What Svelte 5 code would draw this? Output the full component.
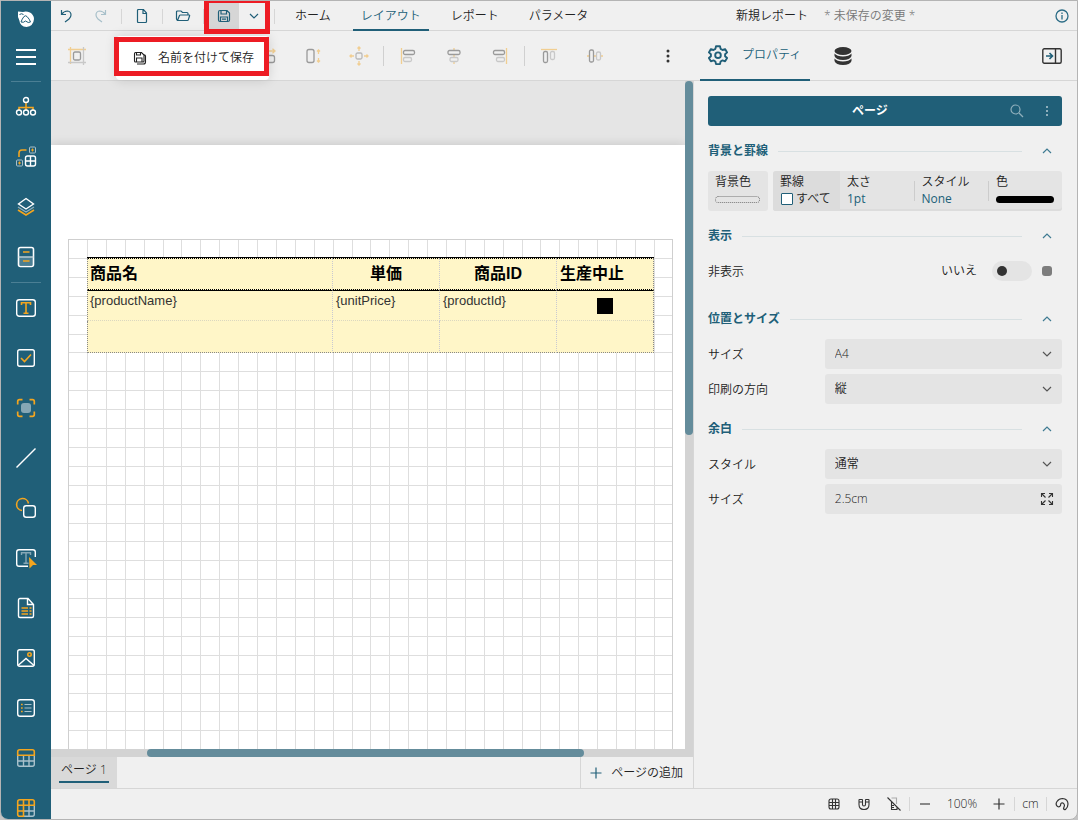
<script>
  const tools = [
    'explorer', 'groups', 'layers', 'sections', 'rule', 'text', 'check', 'container', 'line',
    'shape', 'input', 'richtext', 'image', 'list', 'table', 'tablix'
  ];
  const toolLabels = {
    explorer: 'レポートエクスプローラー', groups: 'グループエディタ', layers: 'レイヤー', sections: 'ライブラリ',
    text: 'テキストボックス', check: 'チェックボックス', container: 'コンテナ', line: '直線', shape: '図形',
    input: '入力フィールド', richtext: '書式付きテキスト', image: 'イメージ', list: 'リスト', table: 'テーブル', tablix: 'Tablix'
  };
  const tabs = ['ホーム', 'レイアウト', 'レポート', 'パラメータ'];
  const arrange = [
    'snap', 'fit', '|', 'same', '|', 'both', 'width', 'height', 'move', '|',
    'left', 'center', 'right', '|', 'top', 'middle'
  ];
  const cell = 18.9;
  const columns = Array.from({ length: 31 }, (_, i) => Math.round((i + 1) * cell) - 1);
  const rows = Array.from({ length: 60 }, (_, i) => Math.round((i + 1) * cell) - 1);

  let activeTab = $state('レイアウト');
  let hidden = $state(false);
  let allBorders = $state(false);
</script>

{#snippet chevron(up)}
  <svg class="chev" width="10" height="6" viewBox="0 0 10 6" fill="none" stroke="currentColor" stroke-width="1.2">
    <path d={up ? 'M1 5l4-4 4 4' : 'M1 1l4 4 4-4'} />
  </svg>
{/snippet}

{#snippet heading(title)}
  <header class="section">
    <h2>{title}</h2>
    <span class="line"></span>
    <button aria-label="{title}を折りたたむ">{@render chevron(true)}</button>
  </header>
{/snippet}

{#snippet toolIcon(name)}
  <svg width="22" height="22" viewBox="0 0 22 22" fill="none" stroke="#fff" stroke-width="1.4">
    {#if name === 'explorer'}
      <path d="M11 7v7M4 14v-2.500h14V14" stroke="#f3a51f" stroke-width="1.600" />
      <circle cx="11" cy="4" r="2.500" /><circle cx="4" cy="16.500" r="2.500" /><circle cx="11" cy="16.500" r="2.500" /><circle cx="18" cy="16.500" r="2.500" />
    {:else if name === 'groups'}
      <path d="M4 11V7q0-3 3-3h4.500" stroke="#f3a51f" stroke-width="1.600" />
      <rect x="14.500" y="1" width="6" height="6" rx="1" stroke="#a9c1cb" stroke-width="1" />
      <rect x="1.500" y="14" width="6" height="6" rx="1" stroke="#a9c1cb" stroke-width="1" />
      <path d="M17.500 2.500v3M16 4h3M4.500 15.500v3M3 17h3" stroke="#f3a51f" stroke-width="1" />
      <rect x="10.500" y="10" width="10" height="10" rx="2" /><path d="M15.500 10v10M10.500 15h10" />
    {:else if name === 'layers'}
      <path d="M3 14l8 5 8-5" stroke="#f3a51f" stroke-width="1.600" />
      <path d="M3 11l8 5 8-5" stroke="#8fafbc" />
      <path d="M11 2.500L18.500 8 11 13 3.500 8z" />
    {:else if name === 'sections'}
      <path d="M4 11.500h14V19H4z" fill="#4b7f94" stroke="none" />
      <rect x="3.500" y="1.500" width="15" height="19" rx="2" stroke-width="1.600" />
      <path d="M3.500 11h15" stroke="#c6d6dc" /><path d="M8 6h6.500M8 15h6.500" stroke="#f3a51f" stroke-width="1.600" />
    {:else if name === 'text'}
      <rect x="1.700" y="2.700" width="18.600" height="16.600" rx="2.500" />
      <path d="M6.500 8V5.800h9V8M11 5.800v10.500M8.500 16.300h5" stroke="#f3a51f" stroke-width="1.600" />
    {:else if name === 'check'}
      <rect x="2.700" y="2.700" width="16.600" height="16.600" rx="2" /><path d="M6 11l3.500 3.500L16 7.500" stroke="#f3a51f" stroke-width="1.600" />
    {:else if name === 'container'}
      <path d="M2.700 7.500V4.500q0-1.800 1.800-1.800h3M14.500 2.700h3q1.800 0 1.800 1.800v3M19.300 14.500v3q0 1.800-1.800 1.800h-3M7.500 19.300h-3q-1.800 0-1.800-1.800v-3" stroke="#f3a51f" stroke-width="1.700" />
      <rect x="6" y="6" width="10" height="10" rx="3" fill="#86a7b5" stroke="none" />
    {:else if name === 'line'}
      <path d="M1.500 20.500l19-19" stroke-width="1.500" />
    {:else if name === 'shape'}
      <path d="M13.500 6.500A6 6 0 1 0 7 13.500" stroke="#f3a51f" stroke-width="1.600" /><rect x="8.700" y="8.700" width="11.600" height="11.600" rx="2.500" />
    {:else if name === 'input'}
      <path d="M20.300 10V5q0-2.300-2.300-2.300H4Q1.700 2.700 1.700 5v12q0 2.300 2.300 2.300h9" />
      <path d="M6.500 8V5.800h9V8M11 5.800v10.500M8.500 16.300h5" stroke="#86a7b5" />
      <path d="M14 10l8 8h-4l-3.500 3.500z" fill="#f3a51f" stroke="none" />
    {:else if name === 'richtext'}
      <path d="M3.500 3q0-1.500 1.500-1.500h8l5.500 6V19q0 1.500-1.500 1.500H5q-1.500 0-1.500-1.500zM12.500 1.500v6h6" />
      <path d="M6.500 11h6.500M6.500 14h6.500M6.500 17h6.500M14.500 11h2M14.500 14h2M14.500 17h2" stroke="#f3a51f" stroke-width="1.500" />
    {:else if name === 'image'}
      <rect x="2.700" y="2.700" width="16.600" height="16.600" rx="2" /><path d="M3 18.500l8-7 8 7" /><circle cx="14.500" cy="7.500" r="1.700" stroke="#f3a51f" stroke-width="1.600" />
    {:else if name === 'list'}
      <rect x="2.700" y="2.700" width="16.600" height="16.600" rx="2.500" />
      <path d="M6 7.500h1.700M6 11h1.700M6 14.500h1.700" stroke="#f3a51f" stroke-width="1.500" /><path d="M9.500 7.500h7M9.500 11h7M9.500 14.500h7" stroke="#a9c1cb" stroke-width="1.100" />
    {:else if name === 'table'}
      <path d="M2.700 8.500v8.800q0 2 2 2h12.600q2 0 2-2V8.500M2.700 14h16.600M8.500 9v10M14 9v10" stroke="#a9c1cb" />
      <path d="M2.700 8.300V4.700q0-2 2-2h12.600q2 0 2 2v3.600z" stroke="#f3a51f" stroke-width="1.600" />
    {:else}
      <path d="M19.300 8.500v8.800q0 2-2 2H8.500M8.500 14h10.800M14 8.500v10.800" stroke="#a9c1cb" />
      <path d="M2.700 4.700q0-2 2-2h12.600q2 0 2 2v3.600H8.500v11H4.700q-2 0-2-2zM2.700 8.300h6M2.700 14h6M8.500 2.700v6M14 2.700v5.600" stroke="#f3a51f" stroke-width="1.600" />
    {/if}
  </svg>
{/snippet}

{#snippet arrangeIcon(name)}
  <svg width="20" height="20" viewBox="0 0 20 20" fill="none" stroke="#333" stroke-width="1.300">
    {#if name === 'snap'}
      <path d="M1 3.500h18M3.500 1v17" stroke="#f3a51f" /><path d="M16.500 1v18M1 16.500h18" stroke="#999" /><rect x="6.500" y="6" width="7" height="8" rx="1.500" />
    {:else if name === 'fit' || name === 'same' || name === 'both'}
      <path d="M1 3.500h18M1 16.500h18" stroke="#999" /><rect x="5" y="6" width="10" height="8" rx="2" />
    {:else if name === 'width'}
      <path d="M2 5h16M15.500 2.800L18 5l-2.500 2.200M4.500 2.800L2 5l2.500 2.200" stroke="#f3a51f" /><rect x="2.500" y="9.500" width="15" height="7" rx="2" />
    {:else if name === 'height'}
      <rect x="4" y="3.500" width="7" height="13" rx="2" /><path d="M15.500 4v4M15.500 12v4M14 5.500L15.500 4 17 5.500M14 14.500l1.500 1.500 1.500-1.500" stroke="#f3a51f" />
    {:else if name === 'move'}
      <rect x="7" y="7" width="6" height="6" rx="1.500" stroke="#777" />
      <path d="M10 1v4M10 15v4M1 10h4M15 10h4M8.500 2.500L10 1l1.500 1.500M8.500 17.500L10 19l1.500-1.500M2.500 8.500L1 10l1.500 1.500M17.500 8.500L19 10l-1.500 1.500" stroke="#f3a51f" />
    {:else if name === 'left'}
      <path d="M3.500 2v16" stroke="#f3a51f" /><rect x="5.500" y="4.500" width="11" height="4" rx="1.500" /><rect x="5.500" y="11.500" width="8" height="4" rx="1.500" stroke="#999" />
    {:else if name === 'center'}
      <path d="M10 2v2M10 9v2M10 16v2" stroke="#f3a51f" /><rect x="4" y="4.500" width="12" height="4" rx="1.500" /><rect x="6" y="11.500" width="8" height="4" rx="1.500" stroke="#999" />
    {:else if name === 'right'}
      <path d="M16.500 2v16" stroke="#f3a51f" /><rect x="3.500" y="4.500" width="11" height="4" rx="1.500" /><rect x="6.500" y="11.500" width="8" height="4" rx="1.500" stroke="#999" />
    {:else if name === 'top'}
      <path d="M2 3.500h16" stroke="#f3a51f" /><rect x="4.500" y="5.500" width="4" height="11" rx="1.500" /><rect x="11.500" y="5.500" width="4" height="8" rx="1.500" stroke="#999" />
    {:else}
      <path d="M2 10h2M9 10h2M16 10h2" stroke="#f3a51f" /><rect x="4.500" y="4" width="4" height="12" rx="1.500" /><rect x="11.500" y="6" width="4" height="8" rx="1.500" stroke="#999" />
    {/if}
  </svg>
{/snippet}

<div class="window">
  <nav class="rail" aria-label="ツールボックス">
    <a class="logo" href="#home" aria-label="ホーム">
      <svg width="18" height="18" viewBox="0 0 18 18">
        <path d="M1 1.500l5 .5Q9 .8 13 2.500 17 5 17 9q-.5 7-7.500 8Q3 16.500 2.200 10L1 7z" fill="#fff" />
        <path d="M4 12q1-3 3-5.500 1.500-1.500 3 0 2.500 2.500 3.500 5.500-2 1.500-5-1-2 2-4.500 1zM2.500 4.500q2-1.500 4 0" fill="none" stroke="#205f78" stroke-width="1" />
      </svg>
    </a>
    <button class="menu" aria-label="メニュー">
      <svg width="20" height="16" viewBox="0 0 20 16" stroke="#fff" stroke-width="2"><path d="M0 1h20M0 8h20M0 15h20" /></svg>
    </button>
    <hr />
    {#each tools as tool}
      {#if tool === 'rule'}
        <hr />
      {:else}
        <button aria-label={toolLabels[tool]}>{@render toolIcon(tool)}</button>
      {/if}
    {/each}
  </nav>

  <div class="main">
    <header class="topbar">
      <button aria-label="元に戻す">
        <svg width="14" height="14" viewBox="0 0 14 14" fill="none" stroke="#205f78" stroke-width="1.200"><path d="M2.500 1v4.500H7M2.500 5.500Q5 2 8.500 2 12 2.500 12 6q0 2-2 4l-4 3" /></svg>
      </button>
      <button class="redo" aria-label="やり直し" disabled>
        <svg width="14" height="14" viewBox="0 0 14 14" fill="none" stroke="#a8c0ca" stroke-width="1.200"><path d="M11.500 1v4.500H7M11.500 5.500Q9 2 5.500 2 2 2.500 2 6q0 2 2 4l4 3" /></svg>
      </button>
      <span class="sep"></span>
      <button aria-label="新規">
        <svg width="12" height="16" viewBox="0 0 12 16" fill="none" stroke="#205f78" stroke-width="1.200"><path d="M1.500 2.500q0-1 1-1h5l3 3.500v8.500q0 1-1 1h-7q-1 0-1-1zM7 1.500v4h4" /></svg>
      </button>
      <span class="sep"></span>
      <button aria-label="開く">
        <svg width="16" height="14" viewBox="0 0 16 14" fill="none" stroke="#205f78" stroke-width="1.200"><path d="M2.500 11.500L1.500 10V3q0-1 1-1H6l1.500 1.500h4.500q1 0 1 1V6M2.500 11.500L4.500 6.500q.2-.5 1-.5H14q.8 0 .6.8l-1.300 4q-.2.700-1 .700z" /></svg>
      </button>
      <span class="sep"></span>
      <div class="save">
        <button class="pressed" aria-label="保存">
          <svg width="14" height="14" viewBox="0 0 14 14" fill="none" stroke="#205f78" stroke-width="1.200"><path d="M1.500 3q0-1.500 1.500-1.500h7L12.500 4v7q0 1.500-1.500 1.500H3Q1.500 12.500 1.500 11zM4 1.500v3.500h5.500V1.500M3.500 12.500V8h7v4.500M5 10.200h4" /></svg>
        </button>
        <button class="drop" aria-label="保存オプション" aria-expanded="true">{@render chevron(false)}</button>
        <span class="frame frame-save"></span>
        <div class="popup">
          <button>
            <svg width="14" height="14" viewBox="0 0 14 14" fill="none" stroke="#222" stroke-width="1.100"><path d="M1.500 2.500q0-1 1-1h6l2.500 2.500v6q0 1-1 1H2.500q-1 0-1-1zM3.500 1.500v2.500h4V1.500M3.500 11V7h5.500v4M11.500 3.500l1 1.500v6q0 2-2 2H4" /></svg>
            <span>名前を付けて保存</span>
          </button>
          <span class="frame frame-popup"></span>
        </div>
      </div>
      <span class="sep"></span>
      <nav class="tabs">
        {#each tabs as tab}
          <button class:active={tab === activeTab} onclick={() => (activeTab = tab)}>{tab}</button>
        {/each}
      </nav>
      <div class="title">
        <span>新規レポート</span>
        <em>* 未保存の変更 *</em>
      </div>
      <button aria-label="情報">
        <svg width="14" height="14" viewBox="0 0 14 14" fill="none" stroke="#2b6c86" stroke-width="1.300"><circle cx="7" cy="7" r="6" /><path d="M7 6v4.500M7 3.500V5" /></svg>
      </button>
    </header>

    <div class="body">
      <main class="workspace">
        <div class="toolbar">
          {#each arrange as item}
            {#if item === '|'}
              <span class="bar"></span>
            {:else}
              <button disabled aria-label={item}>{@render arrangeIcon(item)}</button>
            {/if}
          {/each}
          <button class="more" aria-label="その他">
            <svg width="4" height="14" viewBox="0 0 4 14" fill="#333"><circle cx="2" cy="2" r="1.500" /><circle cx="2" cy="7" r="1.500" /><circle cx="2" cy="12" r="1.500" /></svg>
          </button>
        </div>

        <div class="viewport">
          <div class="canvas">
            <div class="page">
              <div class="sheet">
                <svg class="grid" width="100%" height="100%" stroke="#dedede" shape-rendering="crispEdges" aria-hidden="true">
                  {#each columns as x}<line x1={x} x2={x} y1="0" y2="100%" />{/each}
                  {#each rows as y}<line x1="0" x2="100%" y1={y} y2={y} />{/each}
                </svg>
                <table>
                  <colgroup><col class="c1" /><col class="c2" /><col class="c3" /><col /></colgroup>
                  <thead>
                    <tr><th>商品名</th><th class="mid">単価</th><th class="mid">商品ID</th><th>生産中止</th></tr>
                  </thead>
                  <tbody>
                    <tr><td>{'{productName}'}</td><td>{'{unitPrice}'}</td><td>{'{productId}'}</td><td><span class="mark"></span></td></tr>
                    <tr><td></td><td></td><td></td><td></td></tr>
                  </tbody>
                </table>
              </div>
            </div>
          </div>
          <div class="vscroll"><span></span></div>
        </div>
        <div class="hscroll"><span></span></div>

        <footer class="pages">
          <button class="pagetab"><span>ページ 1</span></button>
          <button class="add">
            <svg width="12" height="12" viewBox="0 0 12 12" stroke="#205f78" stroke-width="1.200"><path d="M6 .5v11M.5 6h11" /></svg>
            ページの追加
          </button>
        </footer>
      </main>

      <aside class="panel">
        <div class="paneltabs">
          <button class="prop">
            <svg width="22" height="22" viewBox="0 0 22 22" fill="none" stroke="#205f78" stroke-width="1.900" stroke-linejoin="round">
              <path d="M9 2.300h4l.6 2.600 1.900 1.100 2.600-.9 2 3.300-2 1.800v2l2 1.800-2 3.300-2.600-.9-1.900 1.100-.6 2.600H9l-.6-2.600-1.900-1.100-2.600.9-2-3.300 2-1.800v-2l-2-1.800 2-3.300 2.600.9 1.900-1.100z" /><circle cx="11" cy="11.200" r="2.800" />
            </svg>
            プロパティ
          </button>
          <button class="data" aria-label="データ">
            <svg width="18" height="20" viewBox="0 0 18 20" fill="#333"><ellipse cx="9" cy="5" rx="8.500" ry="4" /><path d="M.5 7.500Q3 10.500 9 10.500t8.500-3v2.500q-1.500 4-8.500 4T.5 10zM.5 12.500q2.500 3 8.500 3t8.500-3V15q-1.500 4-8.500 4t-8.500-4z" /></svg>
          </button>
          <button class="collapse" aria-label="パネルを閉じる">
            <svg width="20" height="16" viewBox="0 0 20 16" fill="none" stroke="#333" stroke-width="1.400"><rect x=".8" y=".8" width="18.400" height="14.400" rx="1.500" /><path d="M13.500 1v14" /><path d="M4 8h6M7.500 5l3 3-3 3" stroke="#205f78" stroke-width="1.600" /></svg>
          </button>
        </div>

        <div class="props">
          <div class="target">
            <strong>ページ</strong>
            <button aria-label="検索"><svg width="14" height="14" viewBox="0 0 14 14" fill="none" stroke="#8fafbc" stroke-width="1.200"><circle cx="5.500" cy="5.500" r="4.500" /><path d="M9 9l4 4" /></svg></button>
            <button aria-label="オプション"><svg width="4" height="12" viewBox="0 0 4 12" fill="#8fafbc"><path d="M1 1h2v2H1zM1 5h2v2H1zM1 9h2v2H1z" /></svg></button>
          </div>

          {@render heading('背景と罫線')}
          <div class="cards">
            <button class="card"><span>背景色</span><i class="empty"></i></button>
            <div class="borders">
              <div class="all">
                <span>罫線</span>
                <label><input type="checkbox" bind:checked={allBorders} />すべて</label>
              </div>
              <button class="width"><span>太さ</span><b>1pt</b></button>
              <button class="style"><span>スタイル</span><b>None</b></button>
              <button class="color"><span>色</span><i class="black"></i></button>
            </div>
          </div>

          {@render heading('表示')}
          <div class="row toggle">
            <label for="hidden">非表示</label>
            <span class="state">{hidden ? 'はい' : 'いいえ'}</span>
            <input id="hidden" type="checkbox" role="switch" bind:checked={hidden} />
            <button aria-label="式"><i></i></button>
          </div>

          {@render heading('位置とサイズ')}
          <div class="row">
            <label for="size">サイズ</label>
            <div class="field"><select id="size"><option>A4</option></select>{@render chevron(false)}</div>
          </div>
          <div class="row">
            <label for="orient">印刷の方向</label>
            <div class="field"><select id="orient"><option>縦</option></select>{@render chevron(false)}</div>
          </div>

          {@render heading('余白')}
          <div class="row">
            <label for="style">スタイル</label>
            <div class="field"><select id="style"><option>通常</option></select>{@render chevron(false)}</div>
          </div>
          <div class="row">
            <label for="margin">サイズ</label>
            <div class="field">
              <input id="margin" type="text" value="2.5cm" />
              <svg width="14" height="14" viewBox="0 0 14 14" fill="none" stroke="#333" stroke-width="1.100"><path d="M1.500 5V1.500H5M9 1.500h3.500V5M12.500 9v3.500H9M5 12.500H1.500V9M1.500 1.500l4 4M12.500 1.500l-4 4M12.500 12.500l-4-4M1.500 12.500l4-4" /></svg>
            </div>
          </div>
        </div>
      </aside>
    </div>

    <footer class="status">
      <button aria-label="グリッド">
        <svg width="12" height="12" viewBox="0 0 12 12" fill="none" stroke="#333" stroke-width="1.100"><rect x="1" y="1" width="10" height="10" rx="2" /><path d="M4.500 1v10M7.500 1v10M1 4.500h10M1 7.500h10" /></svg>
      </button>
      <button aria-label="スナップ">
        <svg width="12" height="12" viewBox="0 0 12 12" fill="none" stroke="#333" stroke-width="1.100"><path d="M1 2q0-.5.500-.5H4q.5 0 .5.5V6.500q0 1.500 1.500 1.500t1.500-1.500V2q0-.5.500-.5h2.500q.5 0 .5.500v4.500q0 5-5 5t-5-5zM1 4h3.500M7.500 4H11" /></svg>
      </button>
      <button aria-label="ルーラー">
        <svg width="14" height="14" viewBox="0 0 14 14" fill="none" stroke="#333" stroke-width="1.100"><path d="M4.500 1H9.500v6" stroke="#aaa" /><path d="M4.500 5v7.500H10v-2M7 8.500H5M7 10.500H5M.5.500l13 13" /></svg>
      </button>
      <span class="tick"></span>
      <button aria-label="縮小"><svg width="12" height="12" viewBox="0 0 12 12" stroke="#666" stroke-width="1.500"><path d="M1 6h10" /></svg></button>
      <button class="zoom">100%</button>
      <button aria-label="拡大"><svg width="12" height="12" viewBox="0 0 12 12" stroke="#333" stroke-width="1.200"><path d="M.5 6h11M6 .5v11" /></svg></button>
      <span class="tick"></span>
      <button class="unit">cm</button>
      <span class="tick"></span>
      <button aria-label="テーマ">
        <svg width="14" height="14" viewBox="0 0 14 14" fill="none" stroke="#333" stroke-width="1.200"><path d="M2.500 9.500Q0 7.500 2 4.500 4 1.500 7.500 1.500q5.500.5 5.500 5.500 0 3.500-2.500 5.500-1.500.5-2-1l1-3Q9 5.500 6.500 6 5.500 6.500 5.500 8.500 4.500 10.500 2.500 9.500z" /></svg>
      </button>
    </footer>
  </div>
</div>

<style>
  :global(body) {
    margin: 0;
    background: #c4c4c4;
  }
  .window {
    box-sizing: border-box;
    display: flex;
    height: 100vh;
    border: 1px solid #b4b4b4;
    border-radius: 0 0 8px 8px;
    overflow: hidden;
    background: #f0f0f0;
    color: #222;
    font: 350 12px/18px 'Open Sans', 'Noto Sans CJK JP', sans-serif;
  }
  button,
  select,
  input {
    font: inherit;
    color: inherit;
  }
  button {
    display: flex;
    align-items: center;
    justify-content: center;
    padding: 0;
    border: 0;
    background: none;
    white-space: nowrap;
  }
  svg {
    display: block;
    flex: none;
  }

  .rail {
    flex: 0 0 50px;
    display: flex;
    flex-direction: column;
    background: #205f78;
    overflow: hidden;
  }
  .rail button {
    flex: 0 0 50px;
  }
  .rail .logo {
    flex: 0 0 31px;
    display: grid;
    place-content: center;
    padding-top: 4px;
    box-sizing: border-box;
  }
  .rail .menu {
    flex-basis: 49px;
  }
  .rail hr {
    flex: 0 0 1px;
    margin: 0 10px;
    border: 0;
    background: #4b7f94;
  }

  .main {
    flex: 1;
    min-width: 0;
    display: flex;
    flex-direction: column;
  }
  .topbar {
    flex: 0 0 29px;
    display: flex;
    align-items: stretch;
    border-bottom: 1px solid #d6d6d6;
  }
  .topbar > button,
  .save > button {
    width: 30px;
  }
  .topbar .redo {
    margin-left: 5px;
  }
  .sep {
    width: 1px;
    margin: 8px 5px 6px;
    background: #d6d6d6;
  }
  .save {
    display: flex;
    position: relative;
  }
  .save .pressed {
    background: #d6d6d6;
  }
  .drop {
    color: #205f78;
  }
  .frame {
    position: absolute;
    border: 5px solid #ed1c24;
    pointer-events: none;
  }
  .frame-save {
    inset: -3px -1px -4px -5px;
    z-index: 3;
  }
  .popup {
    position: absolute;
    top: 35px;
    right: 0;
    z-index: 2;
    width: 153px;
    height: 44px;
    display: flex;
    background: #fff;
    border-radius: 4px;
    box-shadow: 0 0 12px rgba(0, 0, 0, 0.14);
  }
  .popup button {
    flex: 1;
    gap: 11px;
    padding-left: 2px;
  }
  .frame-popup {
    inset: 1px 0 4px -2px;
  }
  .tabs {
    display: flex;
    gap: 14px;
    margin-left: 7px;
  }
  .tabs button {
    position: relative;
    padding: 0 8px;
  }
  .tabs .active {
    color: #205f78;
  }
  .tabs .active::after {
    content: '';
    position: absolute;
    inset: auto 0 -1px;
    height: 2px;
    background: #205f78;
  }
  .title {
    flex: 1;
    display: flex;
    align-items: center;
    justify-content: center;
    gap: 16px;
    padding-left: 8px;
  }
  .title em {
    color: #777;
    font-style: normal;
  }

  .body {
    flex: 1;
    min-height: 0;
    display: flex;
  }
  .workspace {
    flex: 1;
    min-width: 0;
    display: flex;
    flex-direction: column;
  }
  .toolbar {
    flex: 0 0 49px;
    display: flex;
    align-items: center;
    padding-left: 3px;
    border-bottom: 1px solid #d6d6d6;
  }
  .toolbar button {
    width: 46px;
    opacity: 0.45;
  }
  .bar {
    width: 1px;
    height: 20px;
    margin: 0 1px;
    background: #d0d0d0;
  }
  .toolbar .more {
    width: 50px;
    margin-left: auto;
    opacity: 1;
  }
  .viewport {
    flex: 1;
    min-height: 0;
    display: flex;
  }
  .canvas {
    flex: 1;
    display: flex;
    padding-top: 64px;
    background: #e5e5e5;
    overflow: hidden;
  }
  .page {
    flex: 1;
    display: flex;
    padding: 94px 12px 0 17px;
    background: #fff;
    box-shadow: 0 0 10px rgba(0, 0, 0, 0.15);
  }
  .sheet {
    position: relative;
    flex: 1;
    padding: 17px 18px 0;
    border: 1px solid #cfcfcf;
    border-bottom: 0;
  }
  .grid {
    position: absolute;
    inset: 0;
  }
  table {
    position: relative;
    width: 100%;
    table-layout: fixed;
    border-collapse: separate;
    border-spacing: 0;
    border-top: 1px solid #000;
    background: #fff6c8;
    color: #000;
    font-family: 'Liberation Sans', 'Noto Sans CJK JP', sans-serif;
  }
  .c1 {
    width: 246px;
  }
  .c2 {
    width: 107px;
  }
  .c3 {
    width: 117px;
  }
  th,
  td {
    box-sizing: border-box;
    padding: 1px 3px 0;
    border-right: 1px dotted #c9c9d2;
    text-align: left;
    vertical-align: top;
  }
  th:first-child,
  td:first-child {
    padding-left: 2px;
    border-left: 1px dotted #888;
  }
  th:last-child,
  td:last-child {
    border-right-color: #888;
  }
  th {
    height: 32px;
    border-top: 1px dotted #000;
    border-bottom: 1px dotted #000;
    font: 700 16px/28px 'Liberation Sans', 'Noto Sans CJK JP', sans-serif;
  }
  th.mid {
    text-align: center;
  }
  td {
    height: 31px;
    border-bottom: 1px dotted #dcd8c0;
    color: #333;
    font-size: 13px;
    font-weight: 400;
  }
  tbody tr:first-child td {
    border-top: 1px solid #000;
  }
  tbody tr:last-child td {
    height: 32px;
    border-bottom-color: #888;
  }
  .mark {
    display: block;
    width: 16px;
    height: 16px;
    margin: 6px auto 0;
    background: #000;
  }
  .vscroll {
    flex: 0 0 8px;
    background: #d3d3d3;
  }
  .vscroll span {
    display: block;
    height: 53%;
    border-radius: 4px;
    background: #648c9b;
  }
  .hscroll {
    flex: 0 0 8px;
    background: #d3d3d3;
  }
  .hscroll span {
    display: block;
    width: 68%;
    height: 100%;
    margin-left: 15%;
    border-radius: 4px;
    background: #648c9b;
  }
  .pages {
    flex: 0 0 31px;
    display: flex;
    justify-content: space-between;
  }
  .pagetab {
    align-items: stretch;
    padding: 0 8px 5px;
    background: #d9d9d9;
  }
  .pagetab span {
    padding: 4px 2px 0;
    border-bottom: 2px solid #205f78;
  }
  .add {
    gap: 9px;
    padding: 0 10px 0 9px;
    border-left: 1px solid #d6d6d6;
  }

  .panel {
    flex: 0 0 384px;
    display: flex;
    flex-direction: column;
  }
  .paneltabs {
    flex: 0 0 49px;
    display: flex;
    padding: 0 15px 0 7px;
    border-bottom: 1px solid #d6d6d6;
  }
  .prop {
    gap: 13px;
    padding: 0 9px 0 7px;
    margin-bottom: -1px;
    border-bottom: 2px solid #205f78;
    color: #205f78;
  }
  .data {
    width: 66px;
  }
  .collapse {
    margin-left: auto;
  }
  .props {
    flex: 1;
    padding: 15px 15px 0 14px;
    border-left: 1px solid #d6d6d6;
  }
  .target {
    display: flex;
    align-items: center;
    height: 30px;
    padding-left: 30px;
    border-radius: 3px;
    background: #205f78;
    color: #fff;
  }
  .target strong {
    flex: 1;
    text-align: center;
  }
  .target button {
    width: 30px;
    height: 30px;
  }
  .section {
    display: flex;
    align-items: center;
    height: 30px;
    margin: 10px 0 5px;
  }
  .section h2 {
    margin: 0 10px 0 0;
    color: #205f78;
    font-size: 12px;
    font-weight: 600;
  }
  .section .line {
    flex: 1;
    height: 1px;
    margin-right: 10px;
    background: #d8e0e2;
  }
  .section button {
    width: 30px;
    height: 30px;
    color: #3f7b92;
  }
  .cards {
    display: flex;
    gap: 5px;
    height: 40px;
  }
  .cards button,
  .all {
    display: flex;
    flex-direction: column;
    align-items: stretch;
    justify-content: flex-start;
    padding: 2px 8px 0 7px;
    text-align: left;
  }
  .cards span,
  .cards b,
  .cards label {
    line-height: 17px;
  }
  .cards .card {
    flex: 0 0 45px;
    border-radius: 3px;
    background: #e4e4e4;
  }
  .cards .card,
  .cards .color {
    box-sizing: border-box;
  }
  .cards .card {
    flex-basis: 60px;
  }
  .borders {
    flex: 1;
    display: flex;
    border-radius: 3px;
    background: #e4e4e4;
    overflow: hidden;
    box-shadow: inset 0 -2px #dcdcdc;
  }
  .all {
    flex: 0 0 52px;
    background: #dcdcdc;
  }
  .cards label {
    display: flex;
    align-items: center;
    gap: 3px;
    white-space: nowrap;
  }
  .cards input {
    appearance: none;
    box-sizing: border-box;
    width: 12px;
    height: 12px;
    margin: 0 0 0 1px;
    border: 1px solid #205f78;
    border-radius: 1px;
    background: #fff;
  }
  .cards input:checked {
    background: #205f78;
  }
  .cards b {
    color: #205f78;
    font-weight: 400;
  }
  .width,
  .style,
  .color {
    position: relative;
  }
  .width,
  .style {
    flex: 1;
  }
  .cards .color {
    flex: 0 0 73px;
  }
  .width::after,
  .style::after {
    content: '';
    position: absolute;
    inset: 10px 0 10px auto;
    width: 1px;
    background: #ccc;
  }
  .empty,
  .black {
    box-sizing: border-box;
    height: 7px;
    margin-top: 6px;
    border-radius: 4px;
  }
  .empty {
    border: 1px dotted #777;
  }
  .black {
    background: #000;
  }
  .row {
    display: flex;
    align-items: center;
    height: 30px;
  }
  .row + .row {
    margin-top: 5px;
  }
  .row > label {
    flex: 0 0 33%;
    padding-top: 2px;
  }
  .toggle {
    margin-bottom: 18px;
  }
  .state {
    margin: 0 15px 0 auto;
  }
  .toggle input {
    appearance: none;
    display: flex;
    align-items: center;
    box-sizing: border-box;
    width: 40px;
    height: 20px;
    margin: 0;
    padding: 0 5px;
    border-radius: 10px;
    background: #e4e4e4;
  }
  .toggle input::before {
    content: '';
    width: 10px;
    height: 10px;
    border-radius: 5px;
    background: #333;
  }
  .toggle input:checked::before {
    margin-left: auto;
  }
  .toggle button {
    width: 30px;
    height: 30px;
  }
  .toggle i {
    width: 10px;
    height: 10px;
    border-radius: 3px;
    background: #7d7d7d;
  }
  .field {
    flex: 1;
    display: flex;
    align-items: center;
    position: relative;
  }
  .field select,
  .field input {
    appearance: none;
    box-sizing: border-box;
    width: 100%;
    height: 30px;
    padding: 0 30px 1px 10px;
    border: 0;
    border-radius: 3px;
    background: #e4e4e4;
  }
  .field svg {
    position: absolute;
    right: 8px;
    pointer-events: none;
  }
  .field .chev {
    right: 10px;
    color: #555;
  }

  .status {
    flex: 0 0 30px;
    display: flex;
    align-items: stretch;
    justify-content: flex-end;
    border-top: 1px solid #d6d6d6;
  }
  .status button {
    width: 30px;
  }
  .status .zoom {
    width: 44px;
  }
  .status .unit {
    width: 31px;
  }
  .tick {
    width: 1px;
    margin: 8px 0;
    background: #d6d6d6;
  }
</style>
